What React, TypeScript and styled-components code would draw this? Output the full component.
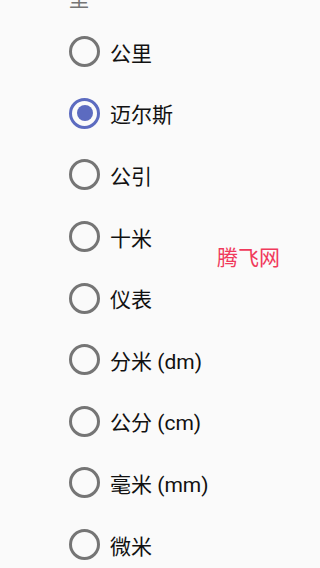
import React, { useState } from "react"
import styled, { createGlobalStyle } from "styled-components"

const GlobalStyle = createGlobalStyle`
    html, body {
        margin: 0;
        padding: 0;
        background: #fafafa;
        overflow: hidden;
    }
    body {
        font-family: Roboto, "Noto Sans CJK SC", sans-serif;
    }
`

const Page = styled.div`
    position: relative;
    width: 303px;
    height: 568px;
    overflow: hidden;
    background: #fafafa;
`

const Content = styled.div`
    display: flex;
    flex-direction: column;
    padding-left: 69px;
    margin-top: -10px;
`

const SectionTitle = styled.div`
    height: 20px;
    line-height: 20px;
    font-size: 20px;
    color: #757575;
    margin-bottom: 11px;
`

const List = styled.div`
    display: flex;
    flex-direction: column;
`

const Row = styled.label`
    display: flex;
    align-items: center;
    height: 61.6px;
    cursor: pointer;
`

const Circle = styled.span<{ $checked: boolean }>`
    box-sizing: border-box;
    width: 31px;
    height: 31px;
    border-radius: 50%;
    border: 3px solid ${(p) => (p.$checked ? "#5c6bc0" : "#757575")};
    display: flex;
    align-items: center;
    justify-content: center;
    flex-shrink: 0;
`

const Dot = styled.span`
    width: 16px;
    height: 16px;
    border-radius: 50%;
    background: #5c6bc0;
`

const Label = styled.span`
    margin-left: 10px;
    font-size: 21px;
    color: #111;
    font-family: Roboto, "Noto Sans CJK SC", sans-serif;
`

const Watermark = styled.div`
    position: absolute;
    left: 217px;
    top: 243px;
    font-size: 21px;
    line-height: 26px;
    font-family: "Noto Sans CJK SC", sans-serif;
    font-weight: 400;
    color: #f03a5c;
`

const units = ["公里", "迈尔斯", "公引", "十米", "仪表", "分米 (dm)", "公分 (cm)", "毫米 (mm)", "微米"]

export default function App() {
    const [selected, setSelected] = useState(1)
    return (
        <Page>
            <GlobalStyle />
            <Content>
                <SectionTitle>里</SectionTitle>
                <List>
                    {units.map((u, i) => (
                        <Row key={u} onClick={() => setSelected(i)}>
                            <Circle $checked={selected === i}>{selected === i && <Dot />}</Circle>
                            <Label>{u}</Label>
                        </Row>
                    ))}
                </List>
            </Content>
            <Watermark>腾飞网</Watermark>
        </Page>
    )
}
